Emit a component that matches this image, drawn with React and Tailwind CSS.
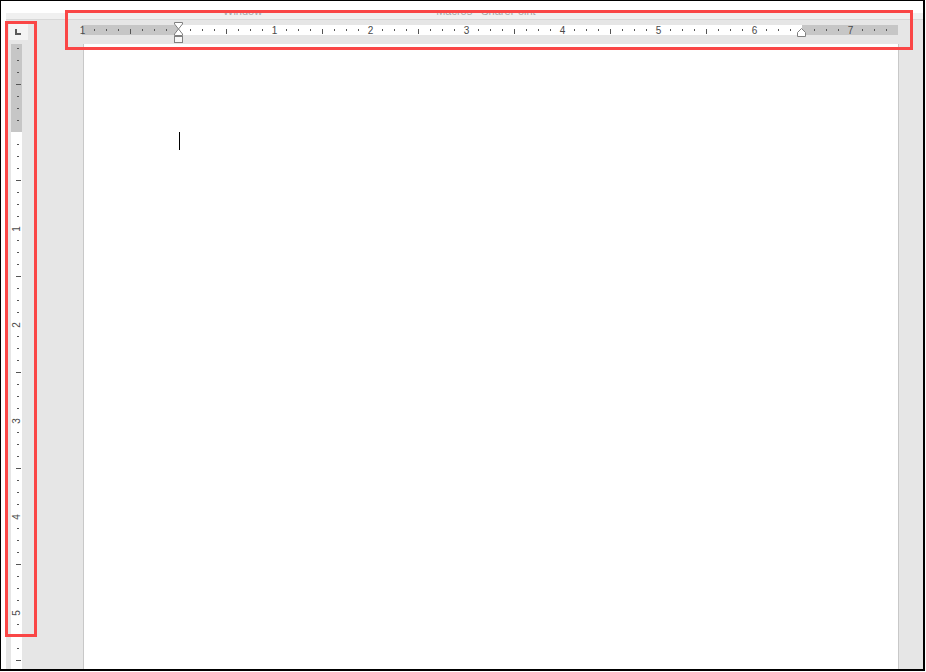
import React from "react";

const hTicks = Array.from({ length: 68 }, (_, k) => k);
const vTicks = Array.from({ length: 52 }, (_, i) => i - 7);

function HRuler() {
  return (
    <div className="relative ml-[52px] mt-[5px] h-[10px] w-[816px] flex">
      <div className="w-[96px] h-full bg-[#c6c6c6]" />
      <div className="w-[624px] h-full bg-white" />
      <div className="flex-1 h-full bg-[#c6c6c6]" />
      {hTicks.map((k) => {
        const p = k * 12;
        if (k === 8) return null;
        if (k % 8 === 0) {
          return (
            <span
              key={k}
              className="absolute top-[1px] h-[10px] -translate-x-1/2 text-[10px] leading-[10px] text-[#4a4a4a]"
              style={{ left: p + 0.5 }}
            >
              {Math.abs(k / 8 - 1)}
            </span>
          );
        }
        if (k % 4 === 0) {
          return <div key={k} className="absolute top-[4px] h-[5px] w-px bg-[#555555]" style={{ left: p }} />;
        }
        return <div key={k} className="absolute top-[4px] h-[2px] w-px bg-[#555555]" style={{ left: p }} />;
      })}
      <svg className="absolute left-[92px] top-[-3px]" width="10" height="22" viewBox="0 0 10 22">
        <polygon points="0.5,0.5 8.5,0.5 8.5,2 4.5,7 0.5,2" fill="#ffffff" stroke="#808080" strokeWidth="1" />
        <polygon points="4.5,7 8.5,12 8.5,13.5 0.5,13.5 0.5,12" fill="#ffffff" stroke="#808080" strokeWidth="1" />
        <rect x="0.5" y="14.5" width="8" height="6" fill="#f7f7f7" stroke="#808080" strokeWidth="1" />
      </svg>
      <svg className="absolute left-[715px] top-[3px]" width="10" height="10" viewBox="0 0 10 10">
        <polygon points="4.5,0.5 8.5,4.5 8.5,8.5 0.5,8.5 0.5,4.5" fill="#ffffff" stroke="#808080" strokeWidth="1" />
      </svg>
    </div>
  );
}

function VRuler() {
  return (
    <div className="relative ml-[5px] mt-[4px] w-[11px] flex-1 flex flex-col">
      <div className="h-[88px] w-full bg-[#c6c6c6]" />
      <div className="flex-1 w-full bg-white" />
      {vTicks.map((j) => {
        const off = 88 + j * 12;
        if (j === 0) return null;
        if (j % 8 === 0) {
          return (
            <span
              key={j}
              className="absolute left-[6px] text-[10px] leading-[10px] text-[#4a4a4a] -translate-x-1/2 -translate-y-1/2 -rotate-90"
              style={{ top: off + 0.5 }}
            >
              {j / 8}
            </span>
          );
        }
        if (j % 4 === 0) {
          return <div key={j} className="absolute left-[5px] h-px w-[5px] bg-[#555555]" style={{ top: off }} />;
        }
        return <div key={j} className="absolute left-[6px] h-px w-[2px] bg-[#555555]" style={{ top: off }} />;
      })}
    </div>
  );
}

export default function App() {
  return (
    <div
      className="relative h-[672px] w-[926px] bg-white"
      style={{ fontFamily: '"Liberation Sans", Arial, sans-serif' }}
    >
      <div className="flex h-[671px] w-[925px] border-t border-l border-r-2 border-b-2 border-black pl-[5px] pt-[12px]">
        <div className="flex flex-1 flex-col overflow-hidden bg-[#e6e6e6]">
          {/* faded ribbon strip */}
          <div className="flex h-[6px] overflow-hidden bg-[#f0f0f0] text-[11px] leading-[12px] text-[#a6a6a6]">
            <span className="ml-[217px] -mt-[8px] whitespace-nowrap">Window</span>
            <span className="ml-[174px] -mt-[8px] whitespace-nowrap">Macros</span>
            <span className="ml-[9px] -mt-[8px] whitespace-nowrap">SharePoint</span>
          </div>
          <div className="h-px bg-[#d8d8d8]" />
          <div className="flex min-h-0 flex-1">
            {/* left column: tab selector + vertical ruler */}
            <div className="flex w-[24px] flex-col">
              <div className="relative ml-[3px] mt-[2px] h-[18px] w-[19px] bg-[#f4f4f4]">
                <div className="absolute left-[6px] top-[7px] h-[6px] w-[2px] bg-[#5a5a5a]" />
                <div className="absolute left-[6px] top-[11px] h-[2px] w-[6px] bg-[#5a5a5a]" />
              </div>
              <VRuler />
            </div>
            {/* ruler + page */}
            <div className="flex flex-1 flex-col">
              <div className="h-[24px]">
                <HRuler />
              </div>
              <div className="ml-[53px] w-[816px] flex-1 border-x border-[#c8c8c8] bg-white pl-[95px] pt-[88px]">
                <div className="h-[18px] w-px bg-black" />
              </div>
            </div>
          </div>
        </div>
      </div>
      {/* annotation boxes */}
      <div className="absolute left-[65px] top-[10px] h-[40px] w-[848px] border-[3px] border-[#fa4646]" />
      <div className="absolute left-[5px] top-[21px] h-[616px] w-[32px] border-[3px] border-[#fa4646]" />
    </div>
  );
}
